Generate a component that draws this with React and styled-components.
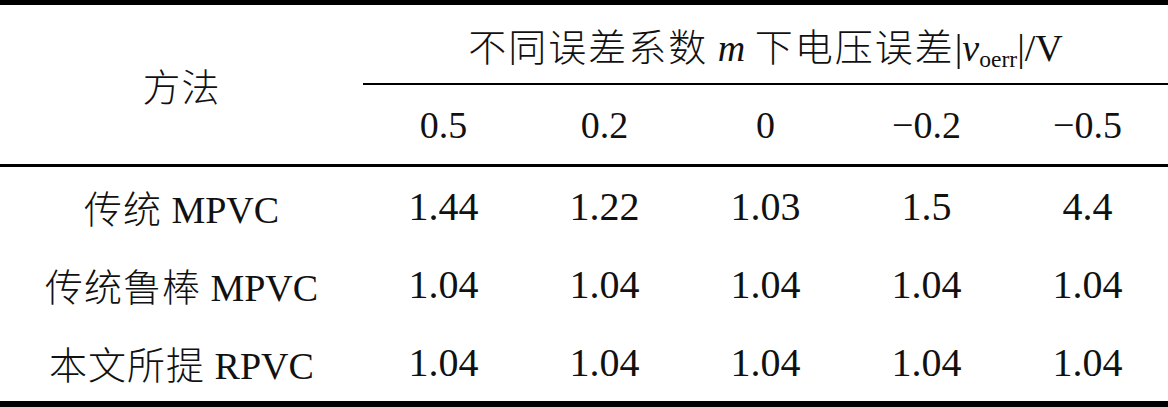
import React from 'react';
import styled, { createGlobalStyle } from 'styled-components';

const GlobalStyle = createGlobalStyle`
  html, body {
    margin: 0;
    padding: 0;
    background: #ffffff;
  }
`;

const Table = styled.table`
  width: 1168px;
  border-collapse: collapse;
  border-top: 5px solid #000000;
  border-bottom: 6px solid #000000;
  font-family: 'Liberation Serif', 'Noto Sans CJK SC', serif;
  font-size: 38px;
  color: #111111;
  table-layout: fixed;
`;

const Cjk = styled.span`
  font-family: 'Noto Sans CJK SC', sans-serif;
  font-weight: 300;
  letter-spacing: ${(p) => p.$spacing || '0px'};
`;

const HeadCell = styled.th`
  font-weight: normal;
  height: ${(p) => p.$height || '78px'};
  padding: 0;
  text-align: center;
  vertical-align: middle;
  border-bottom: ${(p) => p.$rule || 'none'};
`;

const Cell = styled.td`
  height: 78px;
  padding: 0;
  text-align: center;
  vertical-align: middle;
  font-size: ${(p) => (p.$label ? '38px' : '40px')};
`;

const Italic = styled.i`
  font-style: italic;
`;

const Sub = styled.sub`
  font-size: 0.62em;
  vertical-align: -0.25em;
  line-height: 0;
`;

const values = ['0.5', '0.2', '0', '−0.2', '−0.5'];

const rows = [
  { name: '传统', tag: 'MPVC', data: ['1.44', '1.22', '1.03', '1.5', '4.4'] },
  { name: '传统鲁棒', tag: 'MPVC', data: ['1.04', '1.04', '1.04', '1.04', '1.04'] },
  { name: '本文所提', tag: 'RPVC', data: ['1.04', '1.04', '1.04', '1.04', '1.04'] },
];

export default function App() {
  return (
    <>
      <GlobalStyle />
      <Table>
        <colgroup>
          <col style={{ width: '363px' }} />
          <col />
          <col />
          <col />
          <col />
          <col />
        </colgroup>
        <thead>
          <tr>
            <HeadCell rowSpan={2} $rule="3px solid #000">
              <Cjk $spacing="1px">方法</Cjk>
            </HeadCell>
            <HeadCell colSpan={5} $height="78px" $rule="2px solid #000">
              <Cjk $spacing="2px">不同误差系数</Cjk> <Italic>m</Italic> <Cjk $spacing="2px">下电压误差</Cjk>
              |<Italic>v</Italic>
              <Sub>oerr</Sub>|/V
            </HeadCell>
          </tr>
          <tr>
            {values.map((v, i) => (
              <HeadCell key={i} $height="79px" $rule="3px solid #000">
                {v}
              </HeadCell>
            ))}
          </tr>
        </thead>
        <tbody>
          {rows.map((r) => (
            <tr key={r.name}>
              <Cell $label>
                <Cjk $spacing="1px">{r.name}</Cjk> {r.tag}
              </Cell>
              {r.data.map((d, i) => (
                <Cell key={i}>{d}</Cell>
              ))}
            </tr>
          ))}
        </tbody>
      </Table>
    </>
  );
}
